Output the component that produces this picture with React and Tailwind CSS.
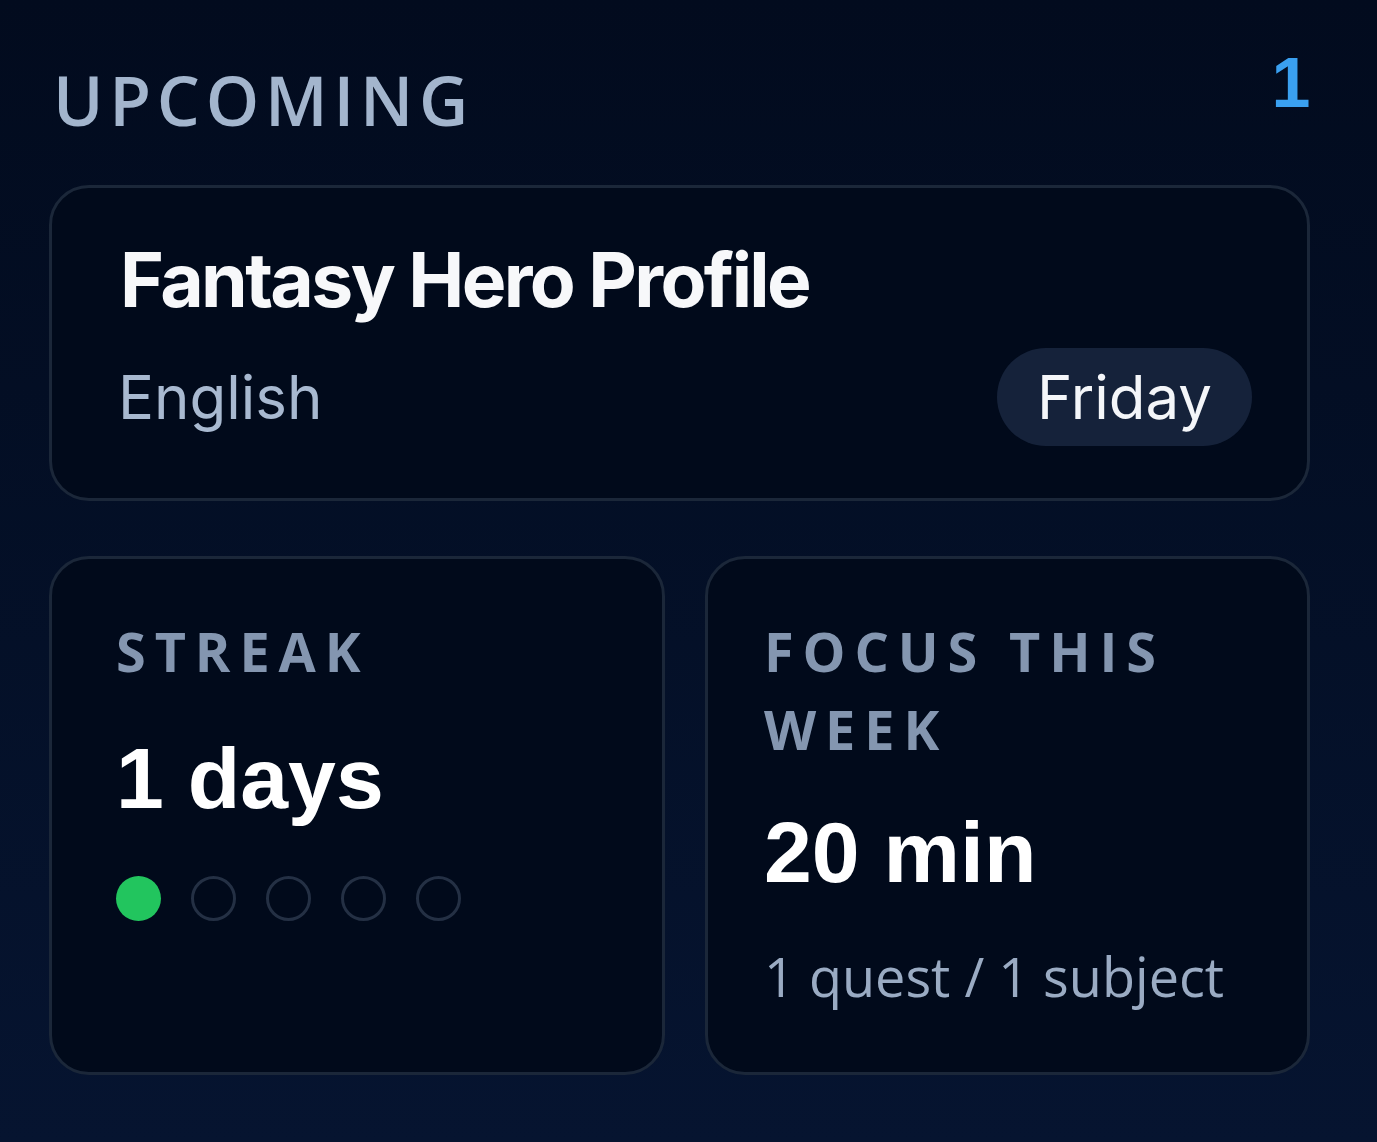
export default function App() {
  const days = [true, false, false, false, false]

  return (
    <div className="min-h-[1142px] w-[1377px] bg-gradient-to-b from-[#020b1e] to-[#061430] px-[49px] pt-[48px] pb-[60px]">
      <div className="w-[1261px]">
        {/* header */}
        <div className="flex items-start justify-between">
          <h2 className="mt-[18px] ml-[4px] font-['Open_Sans',sans-serif] text-[68px] leading-none font-semibold tracking-[0.085em] text-[#a3b5cd]">
            UPCOMING
          </h2>
          <span className="mr-[3px] font-['Liberation_Sans',sans-serif] text-[70px] leading-none font-bold tracking-[-0.05em] text-[#3aa0f0]">
            1
          </span>
        </div>

        {/* next quest */}
        <div className="mt-[51px] rounded-[40px] border-[3px] border-[#1b2739] bg-[#010a1b] pt-[54px] pr-[55px] pb-[52px] pl-[68px]">
          <h3 className="font-['Inter',sans-serif] text-[75px] leading-none font-bold tracking-[-0.035em] text-[#f7f8fa]">
            Fantasy Hero Profile
          </h3>
          <div className="mt-[31px] flex items-center justify-between">
            <span className="-ml-[2px] font-['Inter',sans-serif] text-[60px] leading-none text-[#a8b9d0]">English</span>
            <span className="rounded-full bg-[#15223a] px-[40px] py-[19px] font-['Inter',sans-serif] text-[60px] leading-none text-[#f4f6f9]">
              Friday
            </span>
          </div>
        </div>

        {/* stats */}
        <div className="mt-[55px] grid grid-cols-[616px_605px] gap-[40px]">
          <div className="h-[519px] rounded-[40px] border-[3px] border-[#1b2739] bg-[#010a1b] pt-[53px] pl-[64px]">
            <p className="font-['Open_Sans',sans-serif] text-[54px] leading-[78px] font-bold tracking-[0.165em] text-[#8496b0]">
              STREAK
            </p>
            <p className="mt-[45px] font-['Liberation_Sans',sans-serif] text-[86px] leading-none font-bold text-white">
              1 days
            </p>
            <div className="mt-[55px] flex gap-[30px]">
              {days.map((on, i) => (
                <span
                  key={i}
                  className={
                    on
                      ? 'h-[45px] w-[45px] rounded-full bg-[#22c55e]'
                      : 'h-[45px] w-[45px] rounded-full border-[3px] border-[#243044]'
                  }
                />
              ))}
            </div>
          </div>

          <div className="h-[519px] rounded-[40px] border-[3px] border-[#1b2739] bg-[#010a1b] pt-[53px] pr-[40px] pl-[56px]">
            <p className="font-['Open_Sans',sans-serif] text-[54px] leading-[78px] font-bold tracking-[0.165em] text-[#8496b0]">
              FOCUS THIS WEEK
            </p>
            <p className="mt-[41px] font-['Liberation_Sans',sans-serif] text-[86px] leading-none font-bold text-white">
              20 min
            </p>
            <p className="mt-[54px] font-['Open_Sans',sans-serif] text-[54px] leading-none text-[#9aabc3]">
              1 quest / 1 subject
            </p>
          </div>
        </div>
      </div>
    </div>
  )
}
